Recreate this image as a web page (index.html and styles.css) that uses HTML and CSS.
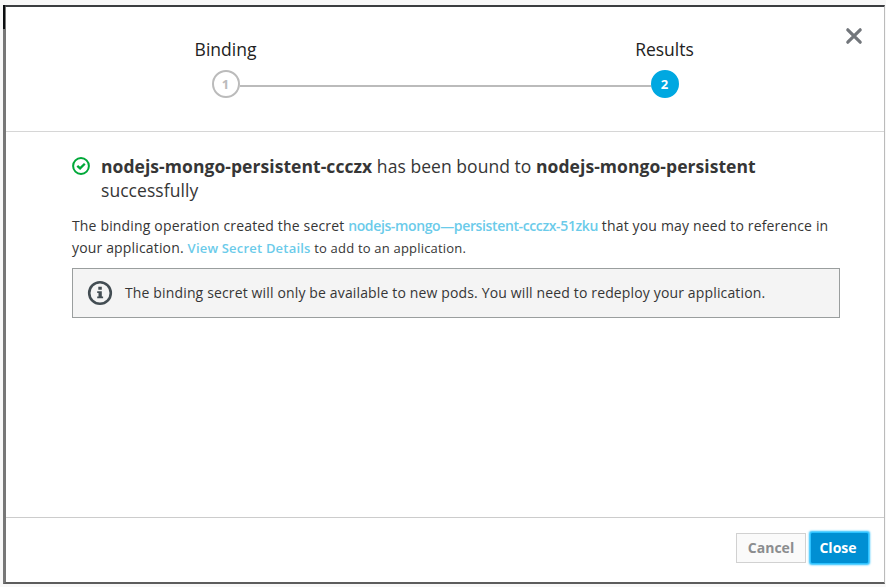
FILE: index.html
```
<!DOCTYPE html>
<html lang="en">
<head>
<meta charset="utf-8">
<title>Create Binding</title>
<link rel="stylesheet" href="styles.css">
</head>
<body>
<div class="modal">
  <header class="header">
    <ol class="steps">
      <li class="step"><span class="step-title">Binding</span><span class="step-number">1</span></li>
      <li class="step-line"></li>
      <li class="step active"><span class="step-title">Results</span><span class="step-number">2</span></li>
    </ol>
    <button class="dismiss" aria-label="Close dialog">
      <svg width="18" height="18" viewBox="0 0 18 18"><path d="M2.8 2.8 15.2 15.2M15.2 2.8 2.8 15.2" fill="none" stroke="#72767b" stroke-width="3.2" stroke-linecap="round"/></svg>
    </button>
  </header>
  <main class="body">
    <div class="result">
      <svg class="ok" width="18" height="18" viewBox="0 0 18 18" fill="none" stroke="#00a839"><circle cx="9" cy="9" r="7.9" stroke-width="2"/><path d="M5.3 8.8 8.1 11.4 12.8 6.8" stroke-width="2.3"/></svg>
      <h1 class="result-title"><strong>nodejs-mongo-persistent-ccczx</strong> has been bound to <strong>nodejs-mongo-persistent</strong><br>successfully</h1>
    </div>
    <p class="description">The binding operation created the secret <a class="secret">nodejs-mongo—persistent-ccczx-51zku</a> that you may need to reference in<br>your application. <a class="details">View Secret Details</a><span class="add"> to add to an application.</span></p>
    <div class="alert">
      <svg width="26" height="26" viewBox="0 0 26 26"><circle cx="13" cy="13" r="10.8" fill="none" stroke="#434d53" stroke-width="2.6"/><path d="M11.3 6.8h3.5v3h-3.5zM10.2 11.2h4.6v5.2h1.3v1.9h-5.9v-1.9h1.3v-3.3h-1.3z" fill="#434d53"/></svg>
      <span class="alert-text">The binding secret will only be available to new pods. You will need to redeploy your application.</span>
    </div>
  </main>
  <footer class="footer">
    <button class="btn cancel">Cancel</button>
    <button class="btn close">Close</button>
  </footer>
</div>
</body>
</html>
```
FILE: styles.css
```
* { box-sizing: border-box; }
body {
  margin: 0;
  height: 587px;
  padding: 5px 1px 3px 3px;
  overflow: hidden;
  background: #f8f8f8;
  font-family: "Open Sans", sans-serif;
  color: #363636;
}
.modal {
  position: relative;
  height: 579px;
  display: flex;
  flex-direction: column;
  background: #fff;
  border: solid;
  border-width: 2px 1px 2px 3px;
  border-color: #3b3d40 #bbb #5c5c5c #777;
}
.modal::before {
  content: "";
  position: absolute;
  top: -2px;
  left: -3px;
  width: 2px;
  height: 24px;
  background: #0b0d10;
}
.header {
  position: relative;
  height: 125px;
  flex: none;
  border-bottom: 1px solid #d6d6d6;
}
.steps {
  display: flex;
  justify-content: center;
  list-style: none;
  margin: 0;
  padding: 30px 0 0;
  width: 878px;
}
.step {
  width: 28px;
  display: flex;
  flex-direction: column;
  align-items: center;
  color: #222;
}
.step-title { font-size: 17.5px; line-height: 24px; white-space: nowrap; }
.step-number {
  width: 28px;
  height: 28px;
  margin-top: 9px;
  border: 2px solid #bbb;
  border-radius: 50%;
  display: flex;
  align-items: center;
  justify-content: center;
  padding-bottom: 1px;
  font-size: 13px;
  font-weight: 700;
  color: #bbb;
}
.active .step-number { background: #00a8e1; border-color: #00a8e1; color: #fff; }
.step-line { width: 411px; height: 2px; margin-top: 48px; background: #bbb; }
.dismiss {
  position: absolute;
  top: 20px;
  right: 21px;
  padding: 0;
  border: 0;
  background: none;
}
.dismiss svg, .alert svg, .ok { display: block; flex: none; }
.body { flex: 1; padding: 22px 44px 0 66px; }
.result { display: flex; gap: 11px; }
.ok { margin-top: 3px; }
.result-title { margin: 0; font-size: 17.5px; line-height: 24px; font-weight: 400; letter-spacing: .053px; white-space: nowrap; }
.description { margin: 13px 0 0; font-size: 14px; line-height: 22px; letter-spacing: .16px; white-space: nowrap; }
.secret, .details { color: #6bcbea; font-weight: 600; }
.secret { font-size: 14px; letter-spacing: -.37px; }
.details, .add { font-size: 13px; letter-spacing: .2px; }
.add { font-weight: 500; }
.alert {
  display: flex;
  align-items: center;
  gap: 12px;
  height: 50px;
  margin-top: 9px;
  padding-left: 14px;
  border: 1px solid #9a9e9e;
  background: #f4f4f4;
  font-size: 14px;
  letter-spacing: .145px;
  white-space: nowrap;
}
.alert-text { padding-bottom: 2px; }
.footer {
  height: 65px;
  flex: none;
  display: flex;
  justify-content: flex-end;
  gap: 5px;
  padding: 15px 16px 0 0;
  border-top: 1px solid #ccc;
}
.btn {
  height: 30px;
  padding: 0 0 1px;
  font: 700 14px "Open Sans", sans-serif;
  border: 1px solid #d1d1d1;
}
.cancel { width: 70px; background: #fafafa; color: #8b8d8f; }
.close {
  width: 57px;
  padding-right: 3px;
  background: #008fd3;
  border-color: #008fd3;
  border-radius: 1px;
  color: #fff;
  box-shadow: 0 0 2px 1.5px #22bfff;
}
```
